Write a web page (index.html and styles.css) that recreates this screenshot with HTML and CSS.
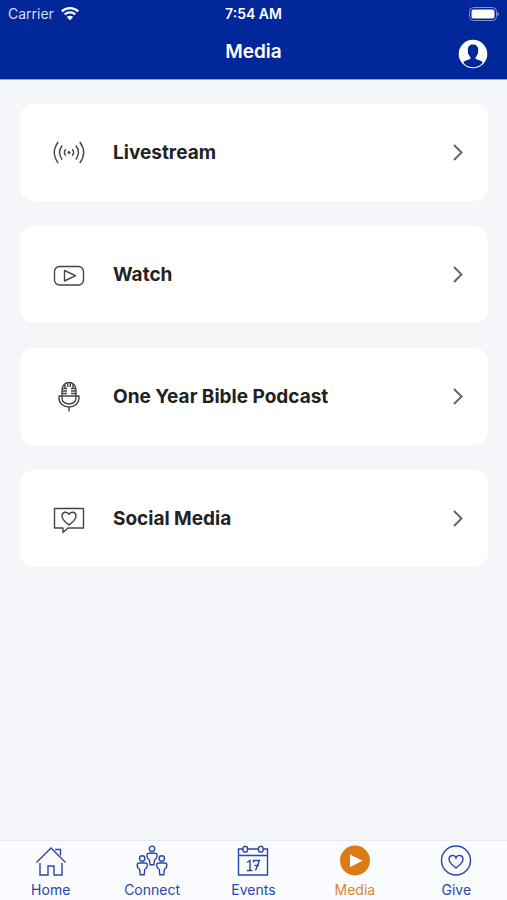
FILE: index.html
```html
<!DOCTYPE html>
<html lang="en">
<head>
<meta charset="utf-8">
<meta name="viewport" content="width=device-width, initial-scale=1">
<title>Media</title>
<link rel="stylesheet" href="styles.css">
</head>
<body>
<header class="header">
  <div class="status">
    <div class="carrier">
      <span>Carrier</span>
      <svg class="wifi" width="20" height="15" viewBox="0 0 20 15" aria-hidden="true">
        <path d="M1.800 5.400a11.800 11.800 0 0 1 16.400 0M4.700 8.500a7.600 7.600 0 0 1 10.600 0" fill="none" stroke="currentColor" stroke-width="2.400"/>
        <path d="M10 14.200 6.800 11a4.600 4.600 0 0 1 6.400 0z" fill="currentColor"/>
      </svg>
    </div>
    <time class="clock">7:54 AM</time>
    <svg class="battery" width="30" height="14" viewBox="0 0 30 14" aria-hidden="true">
      <rect x=".5" y=".5" width="27" height="13" rx="4" fill="none" stroke="#8494d6"/>
      <rect x="2.500" y="2.500" width="23" height="9" rx="2" fill="#fff"/>
      <path d="M28.500 4.800c2 .8 2 3.600 0 4.400z" fill="#8494d6"/>
    </svg>
  </div>
  <div class="titlebar">
    <h1 class="title">Media</h1>
    <button class="profile" type="button" aria-label="Profile">
      <svg width="30" height="30" viewBox="0 0 30 30" aria-hidden="true">
        <circle cx="15" cy="15" r="14.300" fill="#fff"/>
        <path d="M15 5.400c-3.200 0-5.200 2-5.200 5.200 0 1 .1 1.800.3 2.400-.5.300-.2 2 .7 2.400.4 1.400 1 2.300 1.700 3v1.200c-.7 1.400-5.500 1.500-7.200 3.800a12 12 0 0 0 19.400 0c-1.700-2.300-6.500-2.400-7.200-3.800v-1.200c.7-.7 1.300-1.600 1.700-3 .9-.4 1.200-2.100.7-2.400.2-.6.300-1.400.3-2.400 0-3.200-2-5.200-5.200-5.200z" fill="#02279a"/>
      </svg>
    </button>
  </div>
</header>

<main class="list">
  <a class="card" href="#livestream">
    <svg class="icon" width="32" height="32" viewBox="0 0 32 32" aria-hidden="true">
      <circle cx="16" cy="15.500" r="1.500" fill="currentColor" stroke="none"/>
      <path d="M12.800 12.300q-2.800 3.200 0 6.400M19.200 12.300q2.800 3.200 0 6.400M9.200 8.500q-5.400 7 0 14M22.800 8.500q5.400 7 0 14M5.200 5q-7.800 10.500 0 21M26.800 5q7.800 10.500 0 21"/>
    </svg>
    <span class="label">Livestream</span>
    <svg class="chevron" width="12" height="18" viewBox="0 0 12 18" aria-hidden="true"><path d="M2 1 9.500 8.500 2 16"/></svg>
  </a>
  <a class="card" href="#watch">
    <svg class="icon" width="32" height="32" viewBox="0 0 32 32" aria-hidden="true">
      <rect x="1.500" y="7.500" width="29" height="18.500" rx="5"/>
      <path d="M11.500 11.500v10.500L22.500 16.700z"/>
    </svg>
    <span class="label">Watch</span>
    <svg class="chevron" width="12" height="18" viewBox="0 0 12 18" aria-hidden="true"><path d="M2 1 9.500 8.500 2 16"/></svg>
  </a>
  <a class="card" href="#podcast">
    <svg class="icon" width="32" height="32" viewBox="0 0 32 32" aria-hidden="true">
      <path d="M9 15V8.500a7 7 0 0 1 14 0V15M9 7.500h5M9 10h5M9 12.500h5M18 7.500h5M18 10h5M18 12.500h5M12 3v4.500M14.700 2v4M17.300 2v4M20 3v4.500"/>
      <path d="M6 15h3v2.500a7 5.500 0 0 0 14 0V15h3v2.500a10 8.500 0 0 1-20 0zM9 15h14M16 26v4.500"/>
    </svg>
    <span class="label">One Year Bible Podcast</span>
    <svg class="chevron" width="12" height="18" viewBox="0 0 12 18" aria-hidden="true"><path d="M2 1 9.500 8.500 2 16"/></svg>
  </a>
  <a class="card" href="#social">
    <svg class="icon" width="32" height="32" viewBox="0 0 32 32" aria-hidden="true">
      <path d="M1.500 5.500h29V25H15l-5 4.500V25H1.500z"/>
      <path d="M16 22c-3-2.400-7-5-7-9 0-4.200 5.400-5.200 7-1.500 1.600-3.700 7-2.700 7 1.500 0 4-4 6.600-7 9z"/>
    </svg>
    <span class="label">Social Media</span>
    <svg class="chevron" width="12" height="18" viewBox="0 0 12 18" aria-hidden="true"><path d="M2 1 9.500 8.500 2 16"/></svg>
  </a>
</main>

<nav class="tabs" aria-label="Main">
  <a class="tab" href="#home">
    <svg width="32" height="32" viewBox="0 0 32 32" aria-hidden="true">
      <path d="M1.500 17.500 16 3l14.500 14.500M20 4.500h5.500v6M5 18v12h8V21h6v9h8V18"/>
    </svg>
    <span>Home</span>
  </a>
  <a class="tab" href="#connect">
    <svg width="32" height="32" viewBox="0 0 32 32" aria-hidden="true">
      <circle cx="16" cy="3.800" r="2.700"/><circle cx="6.200" cy="13.500" r="2.700"/><circle cx="25.800" cy="13.500" r="2.700"/>
      <path d="M13 8.300h6q2.200 0 2 2l-.3 2.700-2.200 2-.5 4.700h-4l-.5-4.700-2.200-2-.3-2.700q-.2-2 2-2z"/>
      <path d="M3.200 18h6q2.200 0 2 2l-.3 2.500-2.200 2-.5 5.200h-4l-.5-5.200-2.200-2L1.200 20q-.2-2 2-2z"/>
      <path d="M22.800 18h6q2.200 0 2 2l-.3 2.500-2.200 2-.5 5.200h-4l-.5-5.200-2.200-2-.3-2.500q-.2-2 2-2z"/>
    </svg>
    <span>Connect</span>
  </a>
  <a class="tab" href="#events">
    <svg width="32" height="32" viewBox="0 0 32 32" aria-hidden="true">
      <path d="M6 4H1.500v26h29V4H26M10.500 4h11M1.500 10.500h29"/>
      <rect x="6" y="1.500" width="4.500" height="5.500" rx="1.500"/><rect x="21.500" y="1.500" width="4.500" height="5.500" rx="1.500"/>
      <path d="M10 17.500l3-2v10M10 25.500h5.500M16.500 17.500v-2h6l-4 10M17.500 20.500h4.500"/>
    </svg>
    <span>Events</span>
  </a>
  <a class="tab active" href="#media" aria-current="page">
    <svg width="32" height="32" viewBox="0 0 32 32" aria-hidden="true">
      <circle cx="16" cy="15.500" r="15" fill="#dc7b16" stroke="none"/>
      <path d="M11 9.500v12.500l12.500-6.200z" fill="#fff" stroke="none"/>
    </svg>
    <span>Media</span>
  </a>
  <a class="tab" href="#give">
    <svg width="32" height="32" viewBox="0 0 32 32" aria-hidden="true">
      <circle cx="16" cy="15.500" r="14.500"/>
      <path d="M16 23c-3-2.500-7-5.200-7-8.800 0-4.400 5.500-5.200 7-1.200 1.500-4 7-3.200 7 1.200 0 3.600-4 6.300-7 8.800z"/>
    </svg>
    <span>Give</span>
  </a>
</nav>
</body>
</html>
```
FILE: styles.css
```css
* {
  box-sizing: border-box;
}

body {
  margin: 0;
  min-height: 100vh;
  display: flex;
  flex-direction: column;
  background: #f4f6fa;
  font-family: Inter, "Liberation Sans", sans-serif;
  color: #222;
}

a {
  color: inherit;
  text-decoration: none;
}

.header {
  background: #02279a;
  color: #fff;
  border-bottom: 1px solid #8fa2e0;
}

.status {
  display: grid;
  grid-template-columns: 1fr auto 1fr;
  align-items: center;
  height: 27px;
  padding: 0 8px;
  font-size: 14px;
}

.carrier {
  display: flex;
  align-items: center;
  gap: 6px;
  color: #d5dcf5;
}

.wifi {
  color: #fff;
}

.clock {
  font-size: 14px;
  font-weight: 600;
}

.battery {
  justify-self: end;
}

.titlebar {
  display: grid;
  grid-template-columns: 1fr auto 1fr;
  align-items: center;
  height: 52px;
  padding: 0 19px;
}

.title {
  grid-column: 2;
  margin: 0;
  padding-bottom: 2px;
  font-size: 19px;
  line-height: 24px;
  font-weight: 600;
}

.profile {
  justify-self: end;
  display: flex;
  margin: 0;
  padding: 2px 0 0;
  border: 0;
  background: none;
}

.list {
  flex: 1;
  display: flex;
  flex-direction: column;
  gap: 25px;
  padding: 24px 19px 24px 20px;
}

.card {
  display: flex;
  align-items: center;
  min-height: 97px;
  padding: 0 24px 0 33px;
  border-radius: 14px;
  background: #fff;
}

.icon {
  flex: none;
  fill: none;
  stroke: #444;
  stroke-width: 1.4;
  stroke-linejoin: round;
  color: #444;
}

.label {
  flex: 1;
  margin-left: 28px;
  font-size: 19px;
  line-height: 24px;
  font-weight: 700;
}

.chevron {
  flex: none;
  fill: none;
  stroke: #666;
  stroke-width: 2;
}

.tabs {
  display: grid;
  grid-template-columns: repeat(5, 1fr);
  height: 60px;
  border-top: 1px solid #e6e9ef;
  background: #f9fbfe;
}

.tab {
  display: flex;
  flex-direction: column;
  align-items: center;
  gap: 3px;
  padding-top: 4px;
  color: #2b46a8;
  font-size: 14px;
  line-height: 20px;
}

.tab svg {
  flex: none;
  fill: none;
  stroke: currentColor;
  stroke-width: 1.4;
}

.active {
  color: #dc8430;
}
```
